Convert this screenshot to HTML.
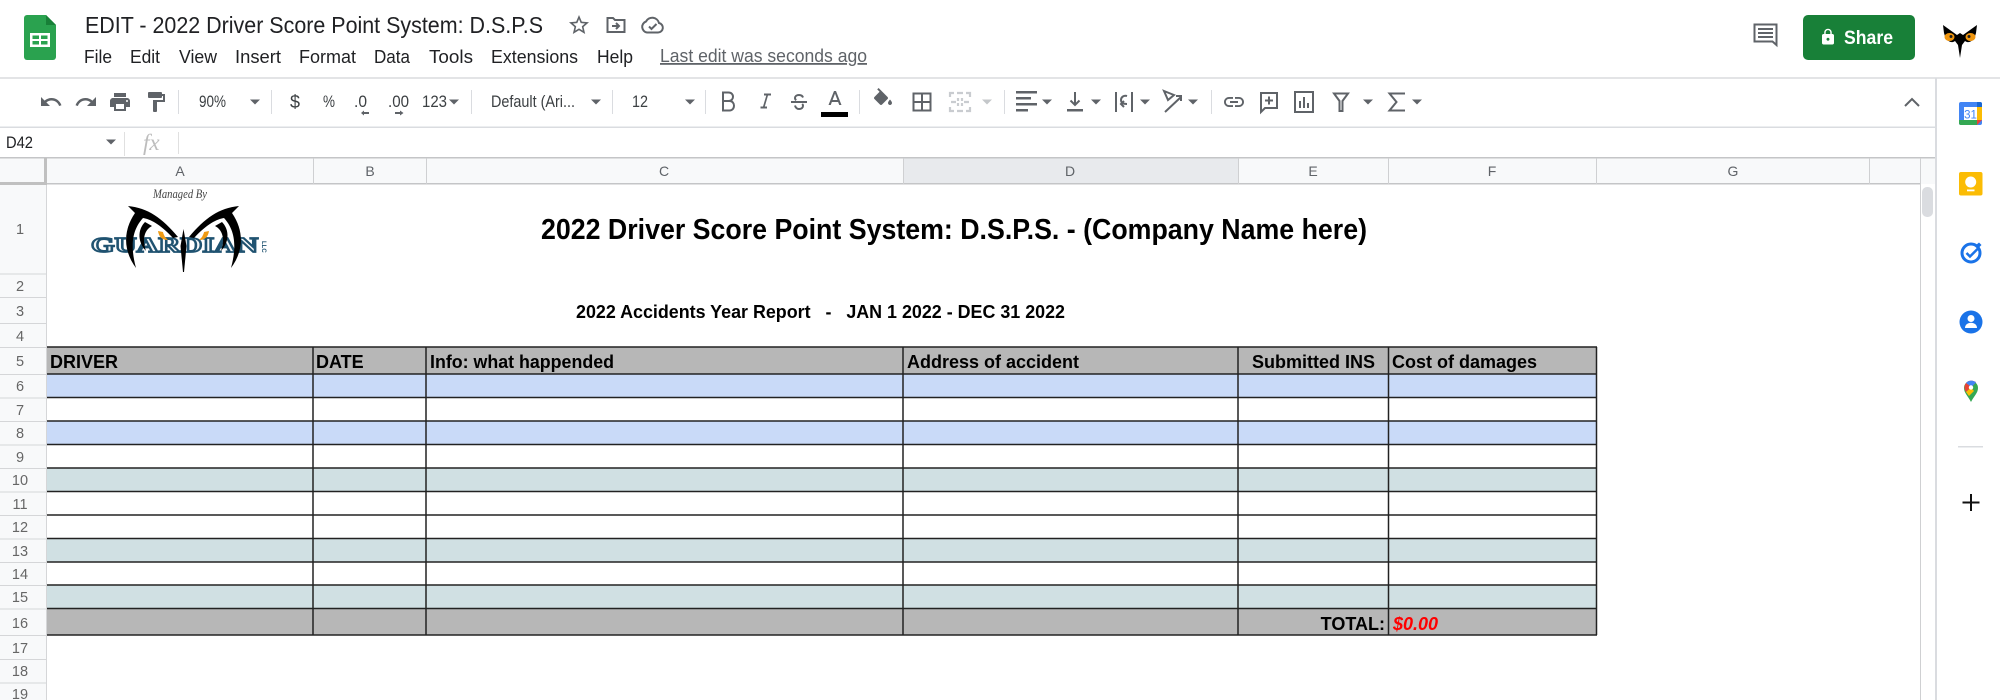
<!DOCTYPE html>
<html lang="en"><head><meta charset="utf-8"><title>2022 Driver Score Point System</title>
<style>
html,body{margin:0;padding:0;background:#fff;width:2000px;height:700px;overflow:hidden}
svg{display:block;position:absolute;left:0;top:0;filter:blur(.35px)}
text{font-family:"Liberation Sans",sans-serif}
.m{font-size:18px;fill:#202124}
.t{font-size:16.5px;fill:#3c4043}
.h{font-size:14px;fill:#5f6368;text-anchor:middle}
.r{font-size:14.5px;fill:#666;text-anchor:middle}
.b{font-size:18px;font-weight:bold;fill:#000}
.i{fill:#5f6368}
.s{fill:none;stroke:#5f6368;stroke-width:2}
</style></head><body>
<svg width="2000" height="700" viewBox="0 0 2000 700" xmlns="http://www.w3.org/2000/svg">
<defs><path id="c" d="M-5-2.500H5L0 2.500Z"/></defs>
<rect width="2000" height="700" fill="#fff"/>

<!-- docs icon -->
<path d="M27 15H46L56 25V57a3 3 0 0 1-3 3H27a3 3 0 0 1-3-3V18a3 3 0 0 1 3-3Z" fill="#2aa24f"/>
<path d="M46 15L56 25H46Z" fill="#188038"/>
<path d="M30 33H50V47H30ZM32.500 35.500V39H39V35.500ZM41 35.500V39H47.500V35.500ZM32.500 41V44.500H39V41ZM41 41V44.500H47.500V41Z" fill="#fff" fill-rule="evenodd"/>

<text x="85" y="33" font-size="23" fill="#202124" textLength="458" lengthAdjust="spacingAndGlyphs">EDIT - 2022 Driver Score Point System: D.S.P.S</text>
<g transform="translate(567,13) scale(1)"><path class="i" d="M22 9.240l-7.190-.62L12 2 9.190 8.630 2 9.240l5.460 4.730L5.820 21 12 17.270 18.180 21l-1.630-7.030L22 9.240zM12 15.400l-3.760 2.270 1-4.280-3.320-2.880 4.380-.38L12 6.100l1.710 4.040 4.380.38-3.320 2.880 1 4.280L12 15.400z"/></g>
<path class="s" d="M607.500 18h5.500l2 2h9.500v12h-17Z" stroke-width="1.600"/><path class="s" stroke-width="1.600" d="M612 26h7m-3-3l3 3-3 3"/>
<path class="s" stroke-width="1.300" d="M647 32.500h11a4.800 4.800 0 0 0 1-9.500 7 7 0 0 0-13-1.500 5.700 5.700 0 0 0 1 11Z"/><path class="s" stroke-width="1.300" d="M649 26.500l2.500 2.500 5-5"/>

<g class="m">
<text x="84" y="63" textLength="28" lengthAdjust="spacingAndGlyphs">File</text>
<text x="130" y="63" textLength="30" lengthAdjust="spacingAndGlyphs">Edit</text>
<text x="179" y="63" textLength="38" lengthAdjust="spacingAndGlyphs">View</text>
<text x="235" y="63" textLength="46" lengthAdjust="spacingAndGlyphs">Insert</text>
<text x="299" y="63" textLength="57" lengthAdjust="spacingAndGlyphs">Format</text>
<text x="374" y="63" textLength="36" lengthAdjust="spacingAndGlyphs">Data</text>
<text x="429" y="63" textLength="44" lengthAdjust="spacingAndGlyphs">Tools</text>
<text x="491" y="63" textLength="87" lengthAdjust="spacingAndGlyphs">Extensions</text>
<text x="597" y="63" textLength="36" lengthAdjust="spacingAndGlyphs">Help</text>
</g>
<text x="660" y="62" font-size="18" fill="#5f6368" textLength="207" lengthAdjust="spacingAndGlyphs" text-decoration="underline">Last edit was seconds ago</text>

<!-- top right -->
<path class="s" stroke-width="2.800" d="M1754.500 24.500h22v20.500l-4-3.500h-18Z"/>
<path class="s" stroke-width="2" d="M1758 29h15M1758 33h15M1758 37h15"/>
<rect x="1803" y="15" width="112" height="45" rx="5" fill="#188038"/>
<g transform="translate(1819,28) scale(.75)"><path fill="#fff" d="M18 8h-1V6c0-2.760-2.240-5-5-5S7 3.240 7 6v2H6c-1.100 0-2 .9-2 2v10c0 1.100.9 2 2 2h12c1.100 0 2-.9 2-2V10c0-1.100-.9-2-2-2zm-6 9c-1.100 0-2-.9-2-2s.9-2 2-2 2 .9 2 2-.9 2-2 2zm3.100-9H8.900V6c0-1.710 1.390-3.100 3.100-3.100 1.710 0 3.100 1.390 3.100 3.100v2z"/></g>
<text x="1844" y="44" font-size="19" font-weight="bold" fill="#fff" textLength="49" lengthAdjust="spacingAndGlyphs">Share</text>
<path fill="#000" d="M1943 25L1957 35L1960 33L1963 35L1977 25L1976 33C1974 41 1969 44 1965 41L1962 45L1960 58L1958 45L1955 41C1951 44 1946 41 1944 33Z"/>
<ellipse cx="1949.500" cy="37" rx="5" ry="4" fill="#f0960f"/><ellipse cx="1970.500" cy="37" rx="5" ry="4" fill="#f0960f"/>
<circle cx="1951" cy="36.500" r="1.500" fill="#222"/><circle cx="1969" cy="36.500" r="1.500" fill="#222"/>

<!-- chrome lines -->
<rect x="0" y="77" width="2000" height="2" fill="#e3e4e6"/>
<rect x="0" y="126.500" width="1935" height="1.500" fill="#dadce0"/>
<rect x="1935" y="78" width="2" height="622" fill="#dadce0"/>

<!-- toolbar icons -->
<g transform="translate(39,90)"><path class="i" d="M12.500 8c-2.650 0-5.050.99-6.900 2.600L2 7v9h9l-3.620-3.620c1.390-1.160 3.160-1.880 5.120-1.880 3.540 0 6.550 2.310 7.600 5.500l2.370-.78C21.080 11.030 17.150 8 12.500 8z"/></g>
<g transform="translate(74,90)"><path class="i" d="M18.400 10.600C16.550 8.990 14.150 8 11.500 8c-4.650 0-8.580 3.030-9.960 7.220L3.900 16c1.050-3.190 4.050-5.500 7.600-5.500 1.950 0 3.730.72 5.120 1.880L13 16h9V7l-3.600 3.600z"/></g>
<g transform="translate(108,90)"><path class="i" d="M19 8H5c-1.660 0-3 1.340-3 3v6h4v4h12v-4h4v-6c0-1.660-1.340-3-3-3zm-3 11H8v-5h8v5zm3-7c-.55 0-1-.45-1-1s.45-1 1-1 1 .45 1 1-.45 1-1 1zm-1-9H6v4h12V3z"/></g>
<g transform="translate(144,90)"><path class="i" d="M18 4V3c0-.55-.45-1-1-1H5c-.55 0-1 .45-1 1v4c0 .55.45 1 1 1h12c.55 0 1-.45 1-1V6h1v4H9v11c0 .55.45 1 1 1h2c.55 0 1-.45 1-1v-9h8V4h-3z"/></g>
<g fill="#dadce0">
<rect x="178" y="90" width="1" height="24"/><rect x="271" y="90" width="1" height="24"/><rect x="471" y="90" width="1" height="24"/><rect x="612" y="90" width="1" height="24"/><rect x="705" y="90" width="1" height="24"/><rect x="859" y="90" width="1" height="24"/><rect x="1004" y="90" width="1" height="24"/><rect x="1211" y="90" width="1" height="24"/>
</g>
<g class="t">
<text x="199" y="107" textLength="27" lengthAdjust="spacingAndGlyphs">90%</text>
<text x="290" y="108" font-size="18">$</text>
<text x="323" y="107" textLength="12" lengthAdjust="spacingAndGlyphs">%</text>
<text x="354" y="107" textLength="13" lengthAdjust="spacingAndGlyphs">.0</text>
<text x="388" y="107" textLength="21" lengthAdjust="spacingAndGlyphs">.00</text>
<text x="422" y="107" textLength="25" lengthAdjust="spacingAndGlyphs">123</text>
<text x="491" y="107" textLength="84" lengthAdjust="spacingAndGlyphs">Default (Ari...</text>
<text x="632" y="107" textLength="16" lengthAdjust="spacingAndGlyphs">12</text>
</g>
<path class="i" d="M364 112h5v-1.500l3 2.500-3 2.500v-1.500H364Z" transform="translate(733,0) scale(-1,1)"/>
<path class="i" d="M400 110.500l3.500 2.500-3.500 2.500V114h-5v-2h5Z"/>
<g class="i">
<use href="#c" x="255" y="102"/><use href="#c" x="454" y="102"/><use href="#c" x="596" y="102"/><use href="#c" x="690" y="102"/>
<use href="#c" x="1047" y="102"/><use href="#c" x="1096" y="102"/><use href="#c" x="1145" y="102"/><use href="#c" x="1193" y="102"/><use href="#c" x="1368" y="102"/><use href="#c" x="1417" y="102"/>
</g>
<use href="#c" x="987" y="102" fill="#c4c7ca"/>

<path class="s" stroke-width="2.600" d="M723 92.500h5.500c6 0 6 8.500 0 8.500h-5.500ZM723 101h6.500c6 0 6 9.500 0 9.500h-6.500Z"/>
<g transform="translate(753,90)"><path class="i" d="M11 4v2h2.300L10 17H7.500v2H14v-2h-2.200L15 6h3V4z" transform="translate(0,-.500)"/></g>
<g transform="translate(787,90)"><path class="s" d="M16 7.500c-.5-1.500-2-2.500-4-2.500-2.500 0-4 1.300-4 3 0 1 .5 1.700 1.200 2.200M8 15.500c.5 2 2 3.500 4 3.500 2.500 0 4-1.400 4-3.200 0-.8-.3-1.300-.8-1.800M4 12h16"/></g>
<g transform="translate(823,88)"><path class="i" d="M11 3L5.500 17h2.250l1.120-3h6.250l1.120 3h2.250L13 3h-2zm-1.380 9L12 5.670 14.380 12H9.620z"/></g>
<rect x="821" y="112" width="27" height="5" fill="#000"/>
<g transform="translate(871,88)"><path class="i" d="M16.560 8.940L7.620 0 6.210 1.410l2.380 2.380-5.150 5.150c-.59.59-.59 1.540 0 2.120l5.500 5.500c.29.29.68.44 1.060.44s.77-.15 1.060-.44l5.500-5.500c.59-.58.59-1.530 0-2.120zM19 11.500s-2 2.170-2 3.500c0 1.100.9 2 2 2s2-.9 2-2c0-1.330-2-3.500-2-3.500z"/></g>
<path class="s" stroke-width="2.600" d="M913.500 93.500h17v17h-17ZM922 93.500v17M913.500 102h17"/>
<g fill="none" stroke="#c9ccd0" stroke-width="2.200"><path d="M950 97v-4h4M966 93h4v4M950 107v4h4M966 111h4v-4M957 93h6M957 111h6M951 102h5M969 102h-5M958 98v3M962 98v3M958 103v3M962 103v3"/></g>
<g class="i"><rect x="1016" y="91" width="21" height="2.500"/><rect x="1016" y="97" width="15" height="2.500"/><rect x="1016" y="103" width="21" height="2.500"/><rect x="1016" y="109" width="12" height="2.500"/></g>
<path class="s" stroke-width="2.200" d="M1075 92v13M1070.500 100.500l4.500 4.500 4.500-4.500"/><rect class="i" x="1067" y="109" width="16" height="2.500"/>
<path class="s" stroke-width="2.200" d="M1116 92v20M1132 92v20M1127 96c-3-1-6 1-6 4s2 4 6 4M1124 107l-3-3 3-3"/>
<path class="s" stroke-width="1.800" d="M1164 91l10 4-6 5ZM1165 112l16-15M1176 96h5v5"/>
<g transform="translate(1222,90)"><path class="i" d="M3.900 12c0-1.710 1.390-3.100 3.100-3.100h4V7H7c-2.760 0-5 2.240-5 5s2.240 5 5 5h4v-1.900H7c-1.710 0-3.100-1.390-3.100-3.100zM8 13h8v-2H8v2zm9-6h-4v1.900h4c1.710 0 3.100 1.390 3.100 3.100s-1.390 3.100-3.100 3.100h-4V17h4c2.760 0 5-2.240 5-5s-2.240-5-5-5z"/></g>
<path class="s" d="M1261 93h16v15h-12l-4 4ZM1269 96.500v8M1265 100.500h8"/>
<rect class="s" x="1295" y="92" width="18" height="20" stroke-width="2.200"/><path class="s" d="M1300 101v7M1304 97v11M1308 103v5" stroke-width="1.600"/>
<path class="s" stroke-width="1.800" d="M1334 93.500h14l-5.500 7.500v10h-3v-10Z"/>
<path class="s" stroke-width="2" d="M1404 94.500v-1h-14.500l7 8.500-7 8.500h14.500v-1"/>
<path class="s" stroke-width="2.400" d="M1905 106l7-7 7 7"/>

<!-- formula bar -->
<text x="6" y="148" font-size="16.500" fill="#202124" textLength="27" lengthAdjust="spacingAndGlyphs">D42</text>
<use href="#c" x="111" y="142" class="i"/>
<rect x="124" y="132" width="1" height="24" fill="#e0e0e0"/>
<text x="143" y="150" font-size="23" font-style="italic" style="font-family:'Liberation Serif',serif" fill="#bdbdbd">fx</text>
<rect x="178" y="132" width="1" height="22" fill="#e0e0e0"/>

<!-- column header -->
<rect x="0" y="157" width="1935" height="27" fill="#f8f9fa"/>
<rect x="903" y="157" width="335" height="27" fill="#e8eaed"/>
<rect x="0" y="157" width="1935" height="1.500" fill="#c4c5c7"/>
<rect x="47" y="183" width="1873" height="1.500" fill="#c4c5c7"/>
<rect x="0" y="182" width="47" height="3" fill="#c0c0c0"/>
<rect x="44" y="158" width="3" height="27" fill="#c0c0c0"/>
<g fill="#cfd0d2"><rect x="313" y="158" width="1" height="26"/><rect x="426" y="158" width="1" height="26"/><rect x="903" y="158" width="1" height="26"/><rect x="1238" y="158" width="1" height="26"/><rect x="1388" y="158" width="1" height="26"/><rect x="1596" y="158" width="1" height="26"/><rect x="1869" y="158" width="1" height="26"/><rect x="1920" y="158" width="1" height="542"/></g>
<g class="h"><text x="180" y="176">A</text><text x="370" y="176">B</text><text x="664" y="176">C</text><text x="1070" y="176">D</text><text x="1313" y="176">E</text><text x="1492" y="176">F</text><text x="1733" y="176">G</text></g>

<!-- row header -->
<rect x="0" y="185" width="47" height="515" fill="#f8f9fa"/>
<rect x="46" y="185" width="1" height="515" fill="#d5d6d8"/>
<g fill="#d5d6d8">
<rect x="0" y="273.500" width="47" height="1"/><rect x="0" y="297" width="47" height="1"/><rect x="0" y="323" width="47" height="1"/><rect x="0" y="347" width="47" height="1"/><rect x="0" y="374" width="47" height="1"/><rect x="0" y="397.500" width="47" height="1"/><rect x="0" y="421" width="47" height="1"/><rect x="0" y="444.500" width="47" height="1"/><rect x="0" y="468" width="47" height="1"/><rect x="0" y="491.500" width="47" height="1"/><rect x="0" y="515" width="47" height="1"/><rect x="0" y="538.500" width="47" height="1"/><rect x="0" y="562" width="47" height="1"/><rect x="0" y="585" width="47" height="1"/><rect x="0" y="608.500" width="47" height="1"/><rect x="0" y="635" width="47" height="1"/><rect x="0" y="659" width="47" height="1"/><rect x="0" y="682.500" width="47" height="1"/>
</g>
<g class="r">
<text x="20" y="234">1</text><text x="20" y="291">2</text><text x="20" y="316">3</text><text x="20" y="341">4</text><text x="20" y="366">5</text><text x="20" y="391">6</text><text x="20" y="415">7</text><text x="20" y="438">8</text><text x="20" y="462">9</text><text x="20" y="485">10</text><text x="20" y="509">11</text><text x="20" y="532">12</text><text x="20" y="556">13</text><text x="20" y="579">14</text><text x="20" y="602">15</text><text x="20" y="628">16</text><text x="20" y="653">17</text><text x="20" y="676">18</text><text x="20" y="699">19</text>
</g>

<!-- table fills -->
<rect x="47" y="347" width="1550" height="27" fill="#b7b7b7"/>
<rect x="47" y="374" width="1550" height="23.500" fill="#c9daf8"/>
<rect x="47" y="421" width="1550" height="23.500" fill="#c9daf8"/>
<rect x="47" y="468" width="1550" height="23.500" fill="#d0e0e3"/>
<rect x="47" y="538.500" width="1550" height="23.500" fill="#d0e0e3"/>
<rect x="47" y="585" width="1550" height="23.500" fill="#d0e0e3"/>
<rect x="47" y="608.500" width="1550" height="26.500" fill="#b7b7b7"/>
<g fill="none" stroke="#222" stroke-width="1.500">
<path d="M47 347H1597M47 374H1597M47 397.500H1597M47 421H1597M47 444.500H1597M47 468H1597M47 491.500H1597M47 515H1597M47 538.500H1597M47 562H1597M47 585H1597M47 608.500H1597M47 635H1597"/>
<path d="M313 347V635M426 347V635M903 347V635M1238 347V635M1388.500 347V635M1596.500 347V635"/>
</g>

<!-- sheet text -->
<text x="541" y="239" font-size="28.500" font-weight="bold" fill="#000" textLength="826" lengthAdjust="spacingAndGlyphs">2022 Driver Score Point System: D.S.P.S. - (Company Name here)</text>
<text x="576" y="318" font-size="18" font-weight="bold" fill="#000" textLength="489" lengthAdjust="spacingAndGlyphs" xml:space="preserve">2022 Accidents Year Report   -   JAN 1 2022 - DEC 31 2022</text>
<g class="b">
<text x="50" y="368">DRIVER</text>
<text x="316" y="368">DATE</text>
<text x="430" y="368" textLength="184" lengthAdjust="spacingAndGlyphs">Info: what happended</text>
<text x="907" y="368">Address of accident</text>
<text x="1252" y="368">Submitted INS</text>
<text x="1392" y="368">Cost of damages</text>
<text x="1385" y="630" text-anchor="end">TOTAL:</text>
<text x="1393" y="630" font-style="italic" style="fill:#f00">$0.00</text>
</g>

<!-- logo -->
<text x="153" y="198" font-size="13" font-style="italic" style="font-family:'Liberation Serif',serif" fill="#444" textLength="54" lengthAdjust="spacingAndGlyphs">Managed By</text>
<text x="91" y="252" font-size="21" font-weight="bold" fill="#f5f7f9" stroke="#1f5270" stroke-width="1.800" textLength="167" lengthAdjust="spacingAndGlyphs" style="font-family:'Liberation Serif',serif">GUARDIAN</text>
<g fill="#000">
<path d="M128 206C148 208 162 218 178 237L173 238C160 224 150 219 143 218C134 228 129 242 136 268C124 252 122 232 135 213Z"/>
<path d="M145 222C139 228 136 240 146 251C142 240 144 230 152 226Z"/>
<path d="M158 231C159 237 162 240 168 240L165 237C164 235 163 233 163 232Z" fill="#ef9a13"/>
</g>
<g fill="#000" transform="translate(367,0) scale(-1,1)">
<path d="M128 206C148 208 162 218 178 237L173 238C160 224 150 219 143 218C134 228 129 242 136 268C124 252 122 232 135 213Z"/>
<path d="M145 222C139 228 136 240 146 251C142 240 144 230 152 226Z"/>
<path d="M158 231C159 237 162 240 168 240L165 237C164 235 163 233 163 232Z" fill="#ef9a13"/>
</g>
<path d="M183.500 229L186.500 246L184 272H183L180.500 246Z" fill="#000"/>
<text x="0" y="0" font-size="6" font-weight="bold" fill="#1f5270" transform="translate(262,241) rotate(90)">LLC</text>

<!-- scrollbar -->
<rect x="1922" y="187" width="11" height="30" rx="5" fill="#dadce0"/>

<!-- side panel -->
<rect x="1959" y="102" width="23" height="23" rx="2" fill="#4285f4"/>
<rect x="1964" y="107" width="13" height="13" fill="#fff"/>
<path d="M1977 102h3a2 2 0 0 1 2 2v3h-5Z" fill="#1967d2"/>
<path d="M1959 120h18v5h-16a2 2 0 0 1-2-2Z" fill="#34a853"/>
<path d="M1977 107h5v13h-5Z" fill="#fbbc04"/>
<path d="M1977 120h5l-5 5Z" fill="#ea4335"/>
<text x="1970.500" y="118.500" font-size="11.500" fill="#4285f4" text-anchor="middle">31</text>
<rect x="1959" y="172" width="23.500" height="23.500" rx="2" fill="#fbbc04"/>
<circle cx="1970.700" cy="182" r="5.500" fill="#fff"/><rect x="1967" y="189.500" width="7.500" height="1.800" fill="#fff"/>
<circle cx="1971" cy="253" r="9" fill="none" stroke="#1a73e8" stroke-width="3"/>
<path d="M1966.500 253l3.500 3.500 8-8" fill="none" stroke="#1a73e8" stroke-width="2.500"/>
<path d="M1976 245l3-2.500 2.500 2.500-3 3Z" fill="#1a73e8"/>
<circle cx="1971" cy="322" r="11.500" fill="#1a73e8"/>
<circle cx="1971" cy="318.500" r="3.500" fill="#fff"/><path d="M1965 328c0-7 12-7 12 0Z" fill="#fff"/>
<path d="M1971 402C1968 396 1964 393 1964 388A7 7 0 0 1 1978 388C1978 393 1974 396 1971 402Z" fill="#34a853"/>
<path d="M1966 383A7 7 0 0 1 1976 382.500L1966 392C1964.500 390 1963.500 386 1966 383Z" fill="#ea4335"/>
<path d="M1966 383A7 7 0 0 1 1976 382.500L1971.500 387Z" fill="#4285f4"/>
<path d="M1966 392L1971 387.500L1974 391L1969 396Z" fill="#fbbc04"/>
<circle cx="1971" cy="387.500" r="2.200" fill="#fff"/>
<rect x="1958" y="446" width="25" height="1.500" fill="#dadce0"/>
<path d="M1971 494v17M1962.500 502.500h17" stroke="#111" stroke-width="2" fill="none"/>
</svg>
</body></html>
